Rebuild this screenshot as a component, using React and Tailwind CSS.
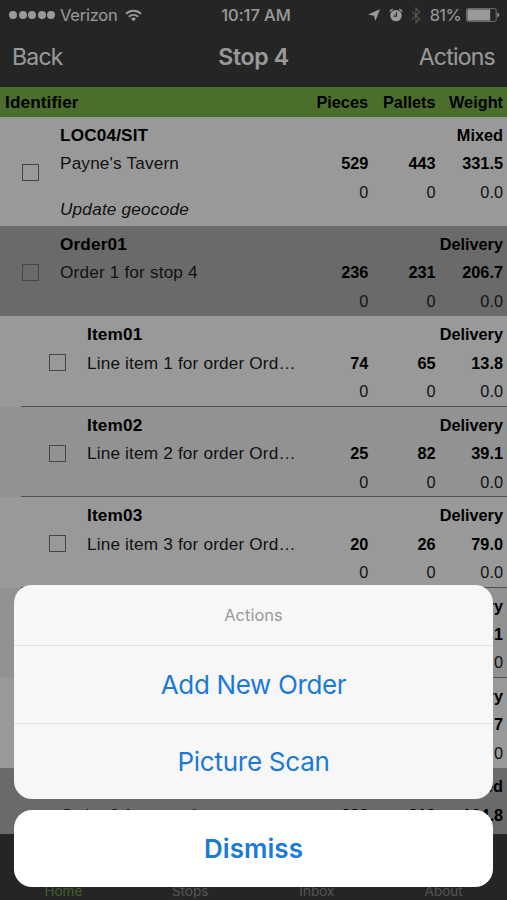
import React, { useState } from 'react';

const rows = [
  { id: 'LOC04/SIT', name: "Payne's Tavern", note: 'Update geocode', type: 'Mixed', kind: 'stop', actual: ['529', '443', '331.5'] },
  { id: 'Order01', name: 'Order 1 for stop 4', type: 'Delivery', kind: 'order', actual: ['236', '231', '206.7'] },
  { id: 'Item01', name: 'Line item 1 for order Ord…', type: 'Delivery', kind: 'item', actual: ['74', '65', '13.8'] },
  { id: 'Item02', name: 'Line item 2 for order Ord…', type: 'Delivery', kind: 'item', alt: true, actual: ['25', '82', '39.1'] },
  { id: 'Item03', name: 'Line item 3 for order Ord…', type: 'Delivery', kind: 'item', actual: ['20', '26', '79.0'] },
  { id: 'Item04', name: 'Line item 4 for order Ord…', type: 'Delivery', kind: 'item', alt: true, actual: ['55', '24', '41.1'] },
  { id: 'Item05', name: 'Line item 5 for order Ord…', type: 'Delivery', kind: 'item', last: true, actual: ['62', '34', '33.7'] },
  { id: 'Order02', name: 'Order 2 for stop 4', type: 'Mixed', kind: 'order', locked: true, actual: ['288', '218', '124.8'] },
];

const rowStyles = {
  stop: 'h-[109px] bg-white',
  order: 'h-[90.4px] bg-[#b1b1b1]',
  item: 'h-[90.4px]',
};

const boxStyles = {
  stop: 'ml-[0.5px] mt-[43px]',
  order: 'ml-[0.5px] mt-[34px]',
  item: 'ml-[27.5px] mt-[34px]',
};

const StatusBar = () => (
  <div className="flex h-[30px] items-center pl-[9px] pr-[7px] text-[17px] text-white">
    <div className="flex flex-1 items-center">
      <div className="flex gap-[1.5px]">
        {[1, 2, 3, 4, 5].map((n) => (
          <span key={n} className="h-2 w-2 rounded-full bg-white" />
        ))}
      </div>
      <span className="ml-[5px] text-[16.5px] tracking-[-0.25px]">Verizon</span>
      <svg className="ml-[8px] h-[13px] w-[17px]" viewBox="0 0 18 14" fill="none" stroke="white" strokeWidth="2.1">
        <path d="M1 5.2a11.4 11.4 0 0 1 16 0" />
        <path d="M4 8.4a7.1 7.1 0 0 1 10 0" />
        <path d="M9 13.2 6.3 10.5a3.8 3.8 0 0 1 5.4 0Z" fill="white" stroke="none" />
      </svg>
    </div>
    <span className="pl-[3px] text-[16.5px] font-medium tracking-[-0.05px]">10:17 AM</span>
    <div className="flex flex-1 items-center justify-end">
      <svg className="h-[12px] w-[12px]" viewBox="0 0 12 12" fill="white">
        <path d="M12 .2 7.4 12 6 6.8 0 5.6Z" />
      </svg>
      <svg className="ml-[9px] h-[14px] w-[14px]" viewBox="0 0 14 14">
        <circle cx="7" cy="7.6" r="5.7" fill="white" />
        <path d="M.8 3.6 3.7 1M13.2 3.6 10.3 1" stroke="white" strokeWidth="1.5" />
        <path d="M7.3 4.2v3.9H4.6" fill="none" stroke="#404040" strokeWidth="1.2" />
      </svg>
      <svg className="ml-[8px] h-[17px] w-[10px]" viewBox="0 0 10 17" fill="none" stroke="#8a8a8a" strokeWidth="1.2">
        <path d="M.8 4.6 8.8 12 5 15.8V1.2L8.8 5 .8 12.4" />
      </svg>
      <span className="ml-[9px] text-[16.5px] tracking-[-0.6px]">81%</span>
      <svg className="ml-[5px] h-[14px] w-[34px]" viewBox="0 0 34 14">
        <rect x=".6" y=".6" width="29.6" height="12.8" rx="1.5" fill="none" stroke="#bbb" strokeWidth="1" />
        <rect x="1.4" y="1.4" width="22.8" height="11.2" fill="white" />
        <path d="M31.4 4.6c2.4.9 2.4 3.9 0 4.8Z" fill="white" />
      </svg>
    </div>
  </div>
);

const NavBar = () => (
  <div className="flex h-[57px] items-center px-[12px] pb-[2px] text-[23px] text-white">
    <button className="flex-1 text-left tracking-[-0.75px]">Back</button>
    <h1 className="font-semibold tracking-[-0.3px]">Stop 4</h1>
    <button className="flex-1 text-right tracking-[-0.75px]">Actions</button>
  </div>
);

const TableHeader = () => (
  <div className="flex h-[30px] shrink-0 items-center bg-[#7db74b] pl-[5px] pr-[4px] font-['Liberation_Sans',sans-serif] text-[16.3px] font-bold">
    <span className="flex-1 pt-[1px] text-[17.2px] tracking-[0.1px]">Identifier</span>
    <span className="w-[67px] text-right">Pieces</span>
    <span className="w-[67.5px] text-right">Pallets</span>
    <span className="w-[67.5px] text-right">Weight</span>
  </div>
);

const Row = ({ row, checked, onToggle }) => {
  const isItem = row.kind === 'item';
  return (
    <div
      className={`flex shrink-0 pl-[21px] font-['Liberation_Sans',sans-serif] leading-[28.4px] ${rowStyles[row.kind]} ${
        isItem ? (row.alt ? 'bg-[#f3f3f3]' : 'bg-white') : ''
      }`}
    >
      <div className={`flex flex-1 pr-[4px] pt-[4px] ${isItem && !row.last ? 'border-b border-[#858585]' : ''}`}>
        <button
          onClick={onToggle}
          className={`mr-[21.5px] h-[17px] w-[17px] shrink-0 border border-[#757575] ${boxStyles[row.kind]} ${
            checked ? 'bg-[#7db74b]' : ''
          } ${row.locked ? 'invisible' : ''}`}
        />
        <div className="flex-1 whitespace-nowrap text-[17.2px]">
          <div className="tracking-[0.15px] font-bold">{row.id}</div>
          <div className="tracking-[0.17px] text-[#1c1c1c]">{row.name}</div>
          {row.note && <div className="mt-[17px] tracking-[0.2px] text-[#1c1c1c] italic">{row.note}</div>}
        </div>
        <div className="w-[202px] shrink-0 text-right text-[16.3px]">
          <div className="font-bold">{row.type}</div>
          <div className="flex font-bold">
            {row.actual.map((v, i) => (
              <span key={i} className="w-[67.4px]">{v}</span>
            ))}
          </div>
          <div className="flex text-[#222]">
            {['0', '0', '0.0'].map((v, i) => (
              <span key={i} className="w-[67.4px]">{v}</span>
            ))}
          </div>
        </div>
      </div>
    </div>
  );
};

const TabBar = () => (
  <div className="flex h-[66px] shrink-0 items-end bg-[#3f3f3f] text-[13.5px] leading-[18px] text-[#8c8c8c]">
    {['Home', 'Stops', 'Inbox', 'About'].map((tab) => (
      <span key={tab} className={`flex-1 text-center ${tab === 'Home' ? 'text-[#6d9d43]' : ''}`}>
        {tab}
      </span>
    ))}
  </div>
);

const ActionSheet = ({ onClose }) => (
  <div className="absolute inset-0 flex flex-col justify-end bg-black/40 px-[14px] pb-[13.5px] text-center">
    <div className="flex flex-col overflow-hidden rounded-[18px] bg-[#f7f7f7]">
      <div className="h-[60px] text-[16.5px] leading-[61px] text-[#999]">Actions</div>
      <button className="h-[78px] border-t border-[#e2e2e2] text-[26px] tracking-[-0.35px] text-[#1b7ad6]">Add New Order</button>
      <button className="h-[76px] border-t border-[#e2e2e2] text-[26px] tracking-[-0.25px] text-[#1b7ad6]">Picture Scan</button>
    </div>
    <button onClick={onClose} className="mt-[11px] h-[76.5px] rounded-[18px] bg-white text-[26px] font-semibold tracking-[0.05px] text-[#1b7ad6]">
      Dismiss
    </button>
  </div>
);

const App = () => {
  const [open, setOpen] = useState(true);
  const [selected, setSelected] = useState([]);

  const toggle = (id) => {
    setSelected(selected.includes(id) ? selected.filter((s) => s !== id) : [...selected, id]);
  };

  return (
    <div className="relative flex h-[900px] w-[507px] flex-col overflow-hidden bg-white font-['Inter',sans-serif] text-black">
      <div className="shrink-0 bg-[#3f3f3f]">
        <StatusBar />
        <NavBar />
      </div>
      <TableHeader />
      <div className="flex min-h-0 flex-1 flex-col overflow-hidden">
        {rows.map((row) => (
          <Row key={row.id} row={row} checked={selected.includes(row.id)} onToggle={() => toggle(row.id)} />
        ))}
      </div>
      <TabBar />
      {open && <ActionSheet onClose={() => setOpen(false)} />}
    </div>
  );
};

export default App;
